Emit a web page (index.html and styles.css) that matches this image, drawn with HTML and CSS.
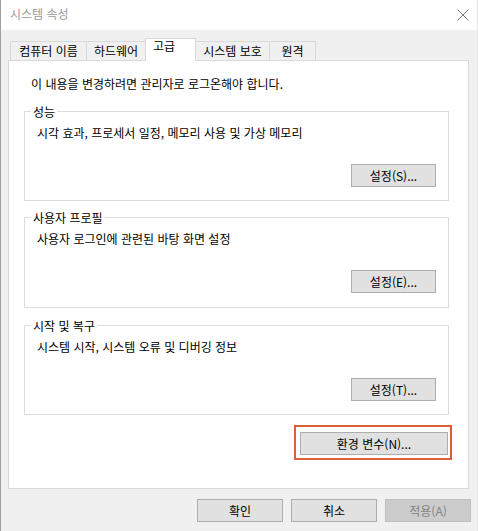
FILE: index.html
```html
<!DOCTYPE html>
<html lang="ko">
<head>
<meta charset="utf-8">
<title>시스템 속성</title>
<link rel="stylesheet" href="styles.css">
</head>
<body>
<div class="window">
  <div class="titlebar">
    <span class="title">시스템 속성</span>
    <svg class="close" width="12" height="12" viewBox="0 0 12 12"><path d="M0.5 0.5 L11.5 11.5 M11.5 0.5 L0.5 11.5" stroke="#7a7a7a" stroke-width="1" fill="none"/></svg>
  </div>
  <div class="content">
    <div class="tabs">
      <div class="tab t1">컴퓨터 이름</div>
      <div class="tab t2">하드웨어</div>
      <div class="tab selected">고급</div>
      <div class="tab t4">시스템 보호</div>
      <div class="tab t5">원격</div>
    </div>
    <div class="panel">
      <p class="intro">이 내용을 변경하려면 관리자로 로그온해야 합니다.</p>
      <fieldset class="group">
        <legend>성능</legend>
        <p class="desc">시각 효과, 프로세서 일정, 메모리 사용 및 가상 메모리</p>
        <div class="btnrow"><button class="btn">설정(S)...</button></div>
      </fieldset>
      <fieldset class="group g2">
        <legend>사용자 프로필</legend>
        <p class="desc">사용자 로그인에 관련된 바탕 화면 설정</p>
        <div class="btnrow"><button class="btn">설정(E)...</button></div>
      </fieldset>
      <fieldset class="group g3">
        <legend>시작 및 복구</legend>
        <p class="desc">시스템 시작, 시스템 오류 및 디버깅 정보</p>
        <div class="btnrow"><button class="btn">설정(T)...</button></div>
      </fieldset>
      <div class="envrow">
        <div class="highlight"><button class="btn env">환경 변수(N)...</button></div>
      </div>
    </div>
    <div class="footer">
      <button class="btn foot">확인</button>
      <button class="btn foot">취소</button>
      <button class="btn foot disabled">적용(A)</button>
    </div>
  </div>
</div>
</body>
</html>
```
FILE: styles.css
```css
* { box-sizing: border-box; }
html, body { margin: 0; padding: 0; }
body {
  font-family: "Noto Sans CJK KR", "Noto Sans", sans-serif;
  font-size: 12px;
  color: #000;
  background: #f0f0f0;
}
.window {
  width: 478px;
  height: 531px;
  background: #f0f0f0;
  border-left: 1px solid #a0a0a0;
  border-right: 1px solid #e6e6e6;
  overflow: hidden;
}
.titlebar {
  height: 30px;
  background: #fff;
  display: flex;
  justify-content: space-between;
  align-items: flex-start;
}
.title {
  margin: 6px 0 0 9px;
  line-height: 16px;
  color: #9a9a9a;
}
.close {
  margin: 9px 8px 0 0;
}
.content {
  padding: 8px 8px 0 7px;
}
.tabs {
  display: flex;
  align-items: flex-end;
  height: 22px;
  padding-left: 2px;
}
.tab {
  height: 19px;
  border: 1px solid #d9d9d9;
  border-bottom: none;
  background: #f0f0f0;
  margin-right: -1px;
  text-align: center;
  line-height: 17px;
  white-space: nowrap;
}
.t1 { width: 77px; }
.t2 { width: 60px; }
.t4 { width: 75px; }
.t5 { width: 47px; }
.tab.selected {
  width: 51px;
  height: 23px;
  margin-bottom: -1px;
  background: #fff;
  text-align: left;
  padding-left: 7px;
  line-height: 14px;
  position: relative;
  z-index: 1;
}
.panel {
  height: 429px;
  background: #fff;
  border: 1px solid #d9d9d9;
  padding: 15px 19px 0 15px;
}
.intro {
  margin: 0;
  padding-left: 7px;
  line-height: 16px;
}
.group {
  margin: 12px 0 0 0;
  border: 1px solid #dcdcdc;
  padding: 6px 12px 13px 12px;
  min-width: 0;
}
.group.g2 { margin-top: 9px; padding-bottom: 14px; }
.group.g3 { margin-top: 10px; }
.group legend {
  margin-left: -6px;
  padding: 0 2px;
  line-height: 15px;
}
.desc {
  margin: 0;
  line-height: 16px;
}
.btnrow {
  display: flex;
  justify-content: flex-end;
  margin-top: 23px;
}
.btn {
  font-family: "Noto Sans CJK KR", "Noto Sans", sans-serif;
  font-size: 12px;
  color: #000;
  height: 23px;
  width: 85px;
  background: #e1e1e1;
  border: 1px solid #adadad;
  border-radius: 0;
  padding: 0;
  margin: 0;
  line-height: 21px;
  text-align: center;
}
.envrow {
  display: flex;
  justify-content: flex-end;
  margin: 10px -3px 0 0;
}
.highlight {
  border: 2px solid #d9603b;
  padding: 5px 2px 3px 4px;
}
.btn.env { width: 148px; }
.footer {
  display: flex;
  justify-content: flex-end;
  gap: 8px;
  margin: 10px -2px 0 0;
}
.btn.foot { width: 86px; }
.btn.disabled {
  background: #cccccc;
  border-color: #bfbfbf;
  color: #838383;
}
```
